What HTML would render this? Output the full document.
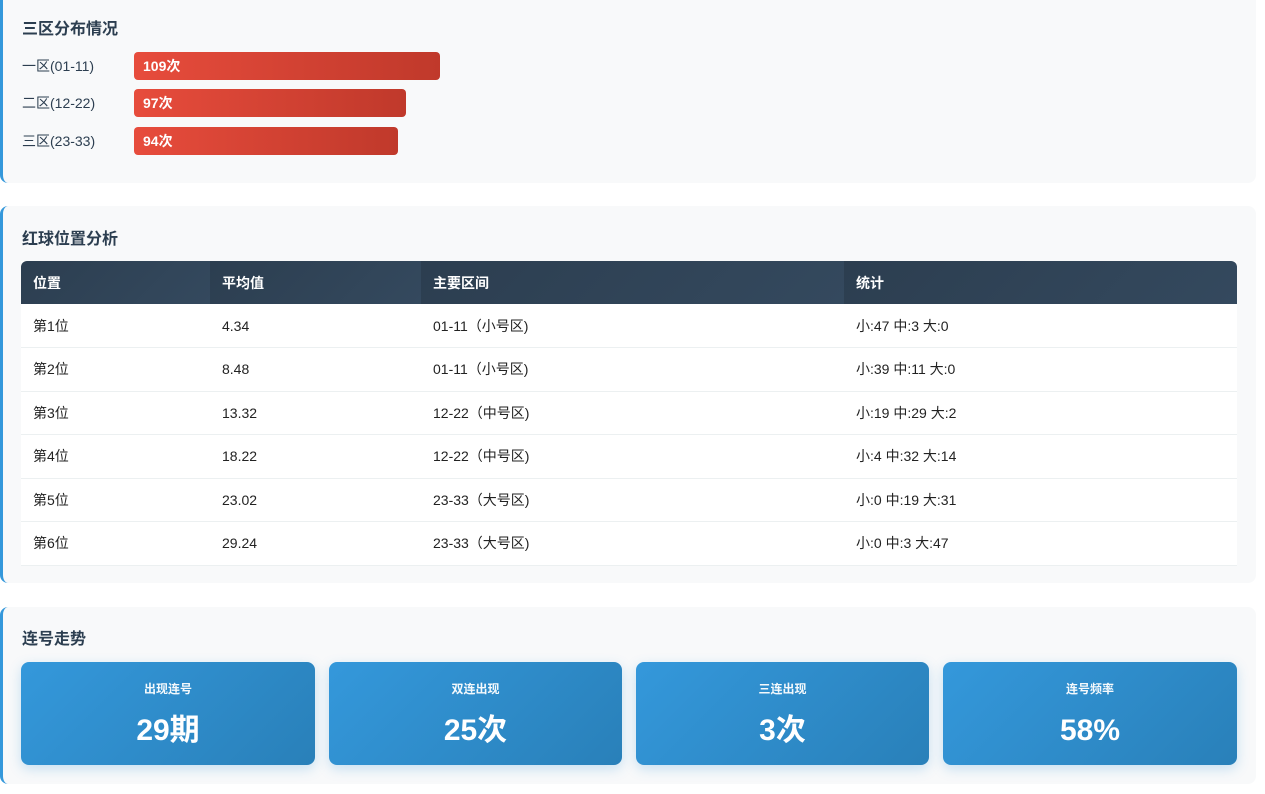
<!DOCTYPE html>
<html><head><meta charset="utf-8"><style>
*{box-sizing:border-box;margin:0;padding:0}
body{width:1265px;height:794px;background:#fff;font-family:"Liberation Sans","Noto Sans CJK SC",sans-serif;color:#2c3e50;position:relative;overflow:hidden}
.card{position:absolute;left:0;width:1256px;background:#f8f9fa;border-left:3px solid #3498db;border-radius:8px}
h3{position:absolute;left:19px;font-size:16px;line-height:20px;font-weight:bold;color:#2c3e50}
.lbl{position:absolute;left:19px;font-size:14px;line-height:18px;color:#2c3e50}
.bar{position:absolute;left:131px;height:28px;border-radius:4px;background:linear-gradient(90deg,#e74c3c,#c0392b);color:#fff;font-weight:bold;font-size:14px;line-height:28px;padding-left:9px}
table{position:absolute;left:18px;top:55px;width:1216px;border-collapse:collapse;font-size:14px;background:#fff}
th{background:linear-gradient(135deg,#2c3e50,#34495e);color:#fff;text-align:left;height:43px;padding-left:12px;font-weight:bold}
th:first-child{border-top-left-radius:6px}th:last-child{border-top-right-radius:6px}
td{height:43.5px;padding-left:12px;border-bottom:1px solid #ecf0f1;color:#222}
.stat{position:absolute;top:55px;height:103px;border-radius:8px;background:linear-gradient(135deg,#3498db,#2980b9);color:#fff;text-align:center;box-shadow:0 4px 12px rgba(52,152,219,.25)}
.stat .t{position:absolute;left:0;right:0;top:19px;font-size:12px;line-height:16px;font-weight:bold;opacity:.95}
.stat .v{position:absolute;left:0;right:0;top:49px;font-size:30px;line-height:40px;font-weight:bold}
</style></head><body>
<div class="card" style="top:-10px;height:193px">
<h3 style="top:30px">三区分布情况</h3>
<div class="lbl" style="top:67px">一区(01-11)</div><div class="bar" style="top:62px;width:306px">109次</div>
<div class="lbl" style="top:104px">二区(12-22)</div><div class="bar" style="top:99px;width:272px">97次</div>
<div class="lbl" style="top:142px">三区(23-33)</div><div class="bar" style="top:137px;width:264px">94次</div>
</div>
<div class="card" style="top:206px;height:377px">
<h3 style="top:24px">红球位置分析</h3>
<table>
<tr><th style="width:189px">位置</th><th style="width:211px">平均值</th><th style="width:423px">主要区间</th><th>统计</th></tr>
<tr><td>第1位</td><td>4.34</td><td>01-11（小号区)</td><td>小:47 中:3 大:0</td></tr>
<tr><td>第2位</td><td>8.48</td><td>01-11（小号区)</td><td>小:39 中:11 大:0</td></tr>
<tr><td>第3位</td><td>13.32</td><td>12-22（中号区)</td><td>小:19 中:29 大:2</td></tr>
<tr><td>第4位</td><td>18.22</td><td>12-22（中号区)</td><td>小:4 中:32 大:14</td></tr>
<tr><td>第5位</td><td>23.02</td><td>23-33（大号区)</td><td>小:0 中:19 大:31</td></tr>
<tr><td>第6位</td><td>29.24</td><td>23-33（大号区)</td><td>小:0 中:3 大:47</td></tr>
</table>
</div>
<div class="card" style="top:607px;height:177px">
<h3 style="top:23px">连号走势</h3>
<div class="stat" style="left:18px;width:294px"><div class="t">出现连号</div><div class="v">29期</div></div>
<div class="stat" style="left:326px;width:293px"><div class="t">双连出现</div><div class="v">25次</div></div>
<div class="stat" style="left:633px;width:293px"><div class="t">三连出现</div><div class="v">3次</div></div>
<div class="stat" style="left:940px;width:294px"><div class="t">连号频率</div><div class="v">58%</div></div>
</div>
</body></html>
